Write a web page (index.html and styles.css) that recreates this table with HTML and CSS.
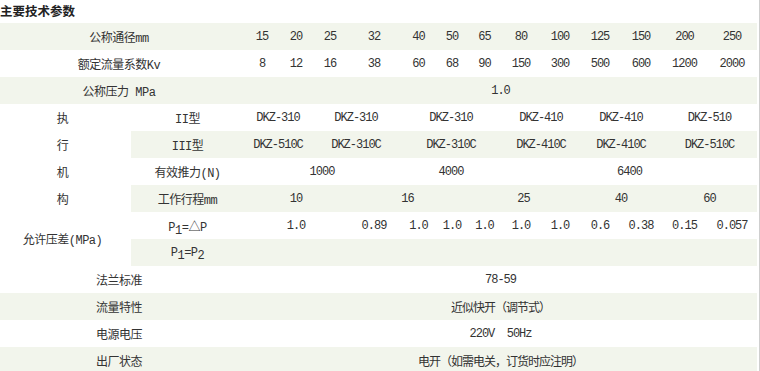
FILE: index.html
```html
<!DOCTYPE html>
<html>
<head>
    <meta charset="utf-8">
    <title>主要技术参数</title>
    <link rel="stylesheet" href="styles.css">
</head>
<body>
    <div class="page">
        <div class="title">主要技术参数</div>
        <table class="spec">
            <colgroup>
                <col class="c-side">
                <col class="c-sub">
                <col style="width:36px"><col style="width:32px"><col style="width:36px"><col style="width:52px">
                <col style="width:37px"><col style="width:30px"><col style="width:35px"><col style="width:38px">
                <col style="width:40px"><col style="width:40px"><col style="width:42px"><col style="width:45px">
                <col style="width:50px">
            </colgroup>
            <tr class="alt">
                <td class="label" colspan="2">公称通径mm</td>
                <td>15</td><td>20</td><td>25</td><td>32</td><td>40</td><td>50</td><td>65</td>
                <td>80</td><td>100</td><td>125</td><td>150</td><td>200</td><td>250</td>
            </tr>
            <tr>
                <td class="label" colspan="2">额定流量系数Kv</td>
                <td>8</td><td>12</td><td>16</td><td>38</td><td>60</td><td>68</td><td>90</td>
                <td>150</td><td>300</td><td>500</td><td>600</td><td>1200</td><td>2000</td>
            </tr>
            <tr class="alt">
                <td class="label" colspan="2">公称压力 MPa</td>
                <td colspan="13">1.0</td>
            </tr>

            <!-- actuator -->
            <tr>
                <td class="side">执</td>
                <td class="sub">II型</td>
                <td colspan="2">DKZ-310</td><td colspan="2">DKZ-310</td><td colspan="3">DKZ-310</td>
                <td colspan="2">DKZ-410</td><td colspan="2">DKZ-410</td><td colspan="2">DKZ-510</td>
            </tr>
            <tr class="alt">
                <td class="side">行</td>
                <td class="sub">III型</td>
                <td colspan="2">DKZ-510C</td><td colspan="2">DKZ-310C</td><td colspan="3">DKZ-310C</td>
                <td colspan="2">DKZ-410C</td><td colspan="2">DKZ-410C</td><td colspan="2">DKZ-510C</td>
            </tr>
            <tr>
                <td class="side">机</td>
                <td class="sub">有效推力(N)</td>
                <td colspan="4">1000</td><td colspan="3">4000</td><td colspan="6">6400</td>
            </tr>
            <tr class="alt">
                <td class="side">构</td>
                <td class="sub">工作行程mm</td>
                <td colspan="3">10</td><td colspan="3">16</td><td colspan="3">25</td>
                <td colspan="2">40</td><td colspan="2">60</td>
            </tr>

            <!-- pressure -->
            <tr>
                <td class="side" rowspan="2">允许压差(MPa)</td>
                <td class="sub">P<sub>1</sub>=△P</td>
                <td colspan="3">1.0</td><td>0.89</td><td>1.0</td><td>1.0</td><td>1.0</td>
                <td>1.0</td><td>1.0</td><td>0.6</td><td>0.38</td><td>0.15</td><td>0.057</td>
            </tr>
            <tr class="alt">
                <td class="sub">P<sub>1</sub>=P<sub>2</sub></td>
                <td colspan="13"></td>
            </tr>

            <tr>
                <td class="label" colspan="2">法兰标准</td>
                <td colspan="13">78-59</td>
            </tr>
            <tr class="alt">
                <td class="label" colspan="2">流量特性</td>
                <td colspan="13">近似快开（调节式）</td>
            </tr>
            <tr>
                <td class="label" colspan="2">电源电压</td>
                <td colspan="13">220V&nbsp;&nbsp;50Hz</td>
            </tr>
            <tr class="alt">
                <td class="label" colspan="2">出厂状态</td>
                <td colspan="13">电开（如需电关，订货时应注明）</td>
            </tr>
        </table>
    </div>
</body>
</html>
```

FILE: styles.css
```css
body {
    margin: 0;
    padding: 0;
    background: #fff;
    color: #333;
    font-family: "Liberation Mono", "Noto Sans CJK SC", monospace;
    font-size: 12px;
}

.page {
    width: 759px;
    min-height: 371px;
    border-right: 1px solid #cfcfcf;
}

.title {
    height: 23px;
    line-height: 22px;
    font-family: "Noto Sans CJK SC", sans-serif;
    font-size: 12.5px;
    font-weight: bold;
    color: #222;
}

.spec {
    width: 757px;
    border-collapse: collapse;
    table-layout: fixed;
}

.c-side {
    width: 131px;
}

.c-sub {
    width: 113px;
}

.spec td {
    height: 27px;
    padding: 0;
    text-align: center;
    vertical-align: middle;
    letter-spacing: -1px;
    white-space: nowrap;
}

.spec tr.alt td {
    background: #f2f5ec;
}

.spec tr.alt td.side {
    background: #fff;
}

.spec td.label {
    padding-right: 6px;
    letter-spacing: -0.5px;
}

.spec td.side,
.spec td.sub {
    letter-spacing: -0.5px;
}

.spec td.side {
    padding-right: 6px;
}

.spec sub {
    font-size: 12px;
    line-height: 0;
    vertical-align: -3px;
}
```
